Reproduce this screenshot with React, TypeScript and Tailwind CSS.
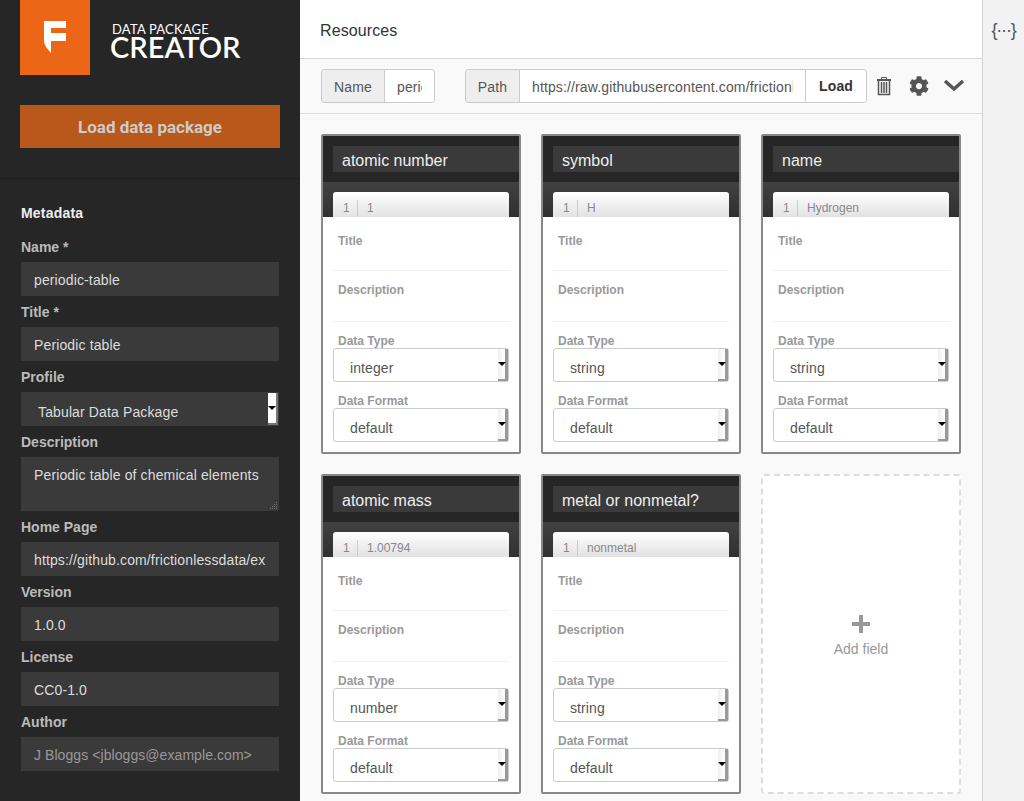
import { FaCog } from 'react-icons/fa';

const metaFields = [
  { label: 'Name *', value: 'periodic-table' },
  { label: 'Title *', value: 'Periodic table' },
];

const metaFieldsBottom = [
  { label: 'Home Page', value: 'https://github.com/frictionlessdata/ex' },
  { label: 'Version', value: '1.0.0' },
  { label: 'License', value: 'CC0-1.0' },
];

const cards = [
  { name: 'atomic number', sample: '1', type: 'integer' },
  { name: 'symbol', sample: 'H', type: 'string' },
  { name: 'name', sample: 'Hydrogen', type: 'string' },
  { name: 'atomic mass', sample: '1.00794', type: 'number' },
  { name: 'metal or nonmetal?', sample: 'nonmetal', type: 'string' },
];

function Label({ children }: { children: string }) {
  return <div className="h-[31px] flex items-center text-sm font-bold text-[#bbb]">{children}</div>;
}

function DarkInput({ value, muted }: { value: string; muted?: boolean }) {
  return (
    <div className={`h-[34px] bg-[#3a3a3a] px-[13px] pt-px flex items-center text-sm overflow-hidden whitespace-nowrap ${muted ? 'tracking-[0.07px] text-[#999]' : 'tracking-[0.13px] text-[#ddd]'}`}>
      {value}
    </div>
  );
}

function FieldSelect({ value }: { value: string }) {
  return (
    <div className="h-[34px] flex border border-[#ccc] rounded-[3px] bg-white pl-4">
      <div className="flex-1 flex items-center pt-[5px] text-sm tracking-[0.1px] text-[#555]">{value}</div>
      <div className="flex items-center justify-center w-[10px] shrink-0 bg-gradient-to-r from-[#efefef] to-white border-r-[3px] border-b-2 border-[#999]">
        <div className="w-0 h-0 border-x-[4px] border-x-transparent border-t-[4px] border-t-black" />
      </div>
    </div>
  );
}

function FieldCard({ name, sample, type }: { name: string; sample: string; type: string }) {
  return (
    <div className="h-[320px] border-2 border-[#888] rounded-[2px] bg-white overflow-hidden">
      <div className="h-[46px] bg-[#262626] pt-[10px] pl-[10px]">
        <div className="h-[26px] bg-[#3a3a3a] pl-[9px] pt-[3px] flex items-center text-base text-[#eee] whitespace-nowrap">{name}</div>
      </div>
      <div className="h-[35px] pt-[10px] px-[10px] bg-gradient-to-b from-[#414141] to-[#303030]">
        <div className="h-[25px] flex text-xs text-[#888] rounded-t-[3px] bg-gradient-to-b from-white to-[#e2e2e2] pt-[8px]">
          <div className="w-[25px] pl-[10px] border-r border-[#ccc] leading-[17px]">1</div>
          <div className="pl-[9px] leading-[17px]">{sample}</div>
        </div>
      </div>
      <div className="px-[10px]">
        <div className="h-[54px] pt-[16px] pl-[5px] border-b border-[#f0f0f0] text-xs font-bold text-[#999]">Title</div>
        <div className="h-[51px] pt-[11px] pl-[5px] border-b border-[#f0f0f0] text-xs font-bold text-[#999]">Description</div>
        <div className="h-[26px] pt-[12px] pl-[5px] text-xs font-bold text-[#999] leading-[14px]">Data Type</div>
        <FieldSelect value={type} />
        <div className="h-[26px] pt-[12px] pl-[5px] text-xs font-bold text-[#999] leading-[14px]">Data Format</div>
        <FieldSelect value="default" />
      </div>
    </div>
  );
}

export default function App() {
  return (
    <div className="h-[801px] w-[1024px] flex overflow-hidden font-['Liberation_Sans',sans-serif]">
      {/* Sidebar */}
      <div className="w-[300px] shrink-0 bg-[#262626]">
        <div className="h-[179px] border-b border-[#1f1f1f] pl-5 pr-5">
          <div className="flex h-[75px]">
            <div className="w-[70px] h-[75px] bg-[#ec6618]">
              <svg width="70" height="75" viewBox="0 0 70 75">
                <path d="M24 21H46V28H31V33H46V41H31V53L26 47L24 42Z" fill="#fff" />
              </svg>
            </div>
            <div className="ml-[21px] pt-[22px] text-white font-['Lato',sans-serif] whitespace-nowrap">
              <div className="ml-px text-[13px] leading-[15px] tracking-[0.2px]">DATA PACKAGE</div>
              <div className="-ml-px -mt-[2px] text-[29px] leading-[24px] font-semibold">CREATOR</div>
            </div>
          </div>
          <div className="mt-[30px] h-[43px] pt-[3px] bg-[#b9581b] flex items-center justify-center font-['Roboto',sans-serif] font-bold text-[17px] text-[#ccc]">
            Load data package
          </div>
        </div>
        <div className="px-[21px]">
          <div className="h-[31px] mt-[18px] flex items-center text-sm font-bold tracking-[0.2px] text-[#eee]">Metadata</div>
          <div className="mt-[3px]">
            {metaFields.map((f) => (
              <div key={f.label}>
                <Label>{f.label}</Label>
                <DarkInput value={f.value} />
              </div>
            ))}
            <Label>Profile</Label>
            <div className="h-[34px] bg-[#3a3a3a] flex pl-[17px] text-sm tracking-[0.13px] text-[#ddd]">
              <div className="flex-1 pt-[10px] leading-[20px] overflow-hidden">Tabular Data Package</div>
              <div className="w-[10px] h-[32px] mt-px mr-px bg-white flex items-center justify-center border-r-2 border-b-2 border-[#777]">
                <div className="w-0 h-0 border-x-[4px] border-x-transparent border-t-[4px] border-t-black" />
              </div>
            </div>
            <Label>Description</Label>
            <div className="relative h-[54px] bg-[#3a3a3a] px-[13px] pt-[8px] text-sm tracking-[0.13px] leading-5 text-[#ddd]">
              Periodic table of chemical elements
              <svg className="absolute right-px bottom-px" width="8" height="8" viewBox="0 0 8 8" fill="#777">
                <rect x="6" y="0" width="1" height="1" />
                <rect x="4" y="2" width="1" height="1" />
                <rect x="6" y="2" width="1" height="1" />
                <rect x="2" y="4" width="1" height="1" />
                <rect x="4" y="4" width="1" height="1" />
                <rect x="6" y="4" width="1" height="1" />
                <rect x="0" y="6" width="1" height="1" />
                <rect x="2" y="6" width="1" height="1" />
                <rect x="4" y="6" width="1" height="1" />
                <rect x="6" y="6" width="1" height="1" />
              </svg>
            </div>
            {metaFieldsBottom.map((f) => (
              <div key={f.label}>
                <Label>{f.label}</Label>
                <DarkInput value={f.value} />
              </div>
            ))}
            <Label>Author</Label>
            <DarkInput value="J Bloggs <jbloggs@example.com>" muted />
          </div>
        </div>
      </div>

      {/* Main */}
      <div className="flex-1 min-w-0 bg-[#f9f9f9]">
        <div className="h-[59px] bg-white border-b border-[#d4d4d4] pl-[20px] pt-[3px] flex items-center text-base tracking-[0.1px] text-[#333]">
          Resources
        </div>
        <div className="h-[55px] border-b border-[#ddd] pl-[21px] flex items-center text-sm tracking-[0.13px] text-[#555]">
          <div className="flex h-[34px] w-[114px] border border-[#ccc] rounded-[3px] overflow-hidden">
            <div className="w-[63px] pt-[2px] bg-[#eee] border-r border-[#ccc] flex items-center justify-center">Name</div>
            <div className="flex-1 min-w-0 pt-[2px] bg-white pl-3 pr-[12px] flex items-center whitespace-nowrap">
              <span className="block overflow-hidden">periodic-table</span>
            </div>
          </div>
          <div className="flex h-[34px] w-[402px] ml-[30px] border border-[#ccc] rounded-[3px] overflow-hidden">
            <div className="w-[54px] pt-[2px] bg-[#eee] border-r border-[#ccc] flex items-center justify-center">Path</div>
            <div className="flex-1 min-w-0 pt-[2px] bg-white pl-3 pr-[12px] flex items-center">
              <span className="block overflow-hidden whitespace-nowrap">https://raw.githubusercontent.com/frictionlessdata</span>
            </div>
            <div className="w-[61px] bg-white border-l border-[#ccc] flex items-center justify-center font-bold text-[#333]">Load</div>
          </div>
          <svg className="ml-[9px]" width="16" height="20" viewBox="0 0 16 20" fill="none" stroke="#555">
            <path d="M1 4H15" strokeWidth="2" />
            <path d="M5.5 3V1.5H10.5V3" strokeWidth="1" />
            <path d="M2.5 5V18.5H13.5V5" strokeWidth="1.5" />
            <path d="M5.5 6V17M8 6V17M10.5 6V17" strokeWidth="1.5" />
          </svg>
          <FaCog className="ml-[17px] text-[#555]" size={20} />
          <svg className="ml-[13px] -mt-[2px]" width="24" height="14" viewBox="0 0 24 14" fill="none" stroke="#555" strokeWidth="3.5">
            <path d="M3 3L12 11L21 3" />
          </svg>
        </div>
        <div className="pt-[20px] pl-[21px] grid grid-cols-[200px_200px_200px] gap-[20px]">
          {cards.map((c) => (
            <FieldCard key={c.name} name={c.name} sample={c.sample} type={c.type} />
          ))}
          <div className="h-[320px] pt-[6px] border-2 border-dashed border-[#ddd] rounded-[3px] bg-white flex flex-col items-center justify-center text-[#999]">
            <svg width="18" height="18" viewBox="0 0 18 18" fill="#999">
              <rect x="7" y="0" width="4" height="18" />
              <rect x="0" y="7" width="18" height="4" />
            </svg>
            <div className="mt-[6px] text-sm">Add field</div>
          </div>
        </div>
      </div>

      {/* Right rail */}
      <div className="w-[42px] shrink-0 bg-[#f2f2f2] border-l border-[#d4d4d4] flex justify-center pt-[20px]">
        <span className="text-lg leading-[20px] text-[#555] tracking-[-1.2px]">{'{···}'}</span>
      </div>
    </div>
  );
}
